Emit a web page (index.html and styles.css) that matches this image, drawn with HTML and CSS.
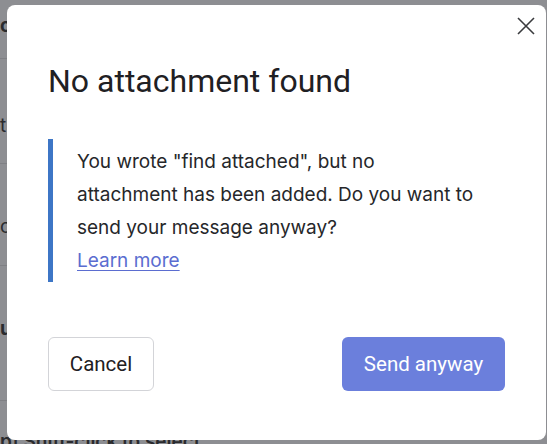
FILE: index.html
```html
<!DOCTYPE html>
<html>
<head>
<meta charset="utf-8">
<link rel="stylesheet" href="styles.css">
</head>
<body>
<div class="backdrop">
  <span class="bg-t bg-1">cont</span>
  <span class="bg-t bg-2">tion</span>
  <span class="bg-t bg-3">o the</span>
  <span class="bg-t bg-4">ue</span>
  <span class="bg-t bg-5">p] Shift-click to select</span>
  <div class="bg-line l1"></div>
  <div class="bg-line l2"></div>
  <div class="bg-line l3"></div>
  <div class="bg-line l4"></div>
</div>
<div class="dialog">
  <button class="close" aria-label="Close">
    <svg width="18" height="18" viewBox="0 0 18 18"><path d="M1 1 L17 17 M17 1 L1 17" stroke="#3a3b3e" stroke-width="1.6" fill="none"/></svg>
  </button>
  <h1 class="title">No attachment found</h1>
  <div class="note">
    <p>You wrote "find attached", but no<br>attachment has been added. Do you want to<br>send your message anyway?</p>
    <a class="link" href="#">Learn more</a>
  </div>
  <div class="actions">
    <button class="btn cancel">Cancel</button>
    <button class="btn send">Send anyway</button>
  </div>
</div>
</body>
</html>
```
FILE: styles.css
```css
html, body {
  margin: 0;
  padding: 0;
}
body {
  width: 547px;
  height: 444px;
  background: #8d8e92;
  position: relative;
  overflow: hidden;
  font-family: Roboto, "Liberation Sans", sans-serif;
}
.backdrop {
  position: absolute;
  inset: 0;
}
.bg-t {
  position: absolute;
  color: #2a2b2e;
  font-family: Inter, sans-serif;
  font-size: 19px;
  white-space: nowrap;
}
.bg-1 { left: 0; top: 14px; font-weight: 700; }
.bg-2 { left: 0; top: 114px; }
.bg-3 { left: 0; top: 215px; }
.bg-4 { left: 0; top: 317px; font-weight: 700; }
.bg-5 { left: 0; top: 430px; font-weight: 600; }
.bg-line {
  position: absolute;
  left: 0;
  width: 7px;
  height: 1px;
  background: #7f8084;
}
.l1 { top: 58px; }
.l2 { top: 163px; }
.l3 { top: 265px; }
.l4 { top: 400px; }

.dialog {
  position: absolute;
  left: 7px;
  top: 5px;
  width: 539px;
  height: 435px;
  background: #fff;
  border-radius: 8px;
  box-sizing: border-box;
  padding: 0 41px;
  display: flex;
  flex-direction: column;
}
.close {
  position: absolute;
  right: 11px;
  top: 12px;
  width: 18px;
  height: 18px;
  padding: 0;
  border: 0;
  background: none;
  display: flex;
}
.title {
  margin: 58px 0 0;
  font-family: Roboto, sans-serif;
  font-weight: 400;
  font-size: 32px;
  line-height: 36px;
  color: #1f2023;
}
.note {
  margin-top: 40px;
  border-left: 5px solid #3d76c6;
  padding: 6px 0 5px 24px;
  font-family: Inter, sans-serif;
  font-size: 19px;
  line-height: 33px;
  color: #26272a;
}
.note p {
  margin: 0;
  white-space: nowrap;
}
.link {
  color: #5b6dd0;
  text-decoration: underline;
  text-underline-offset: 3px;
  text-decoration-thickness: 1px;
}
.actions {
  margin-top: 55px;
  display: flex;
  justify-content: space-between;
}
.btn {
  height: 54px;
  border-radius: 6px;
  font-family: Roboto, sans-serif;
  font-size: 20.5px;
  padding: 0;
  box-sizing: border-box;
}
.cancel {
  width: 106px;
  background: #fff;
  border: 1.5px solid #d3d4d8;
  color: #1f2023;
}
.send {
  width: 163px;
  background: #6b7fdc;
  border: 0;
  color: #fff;
}
```
